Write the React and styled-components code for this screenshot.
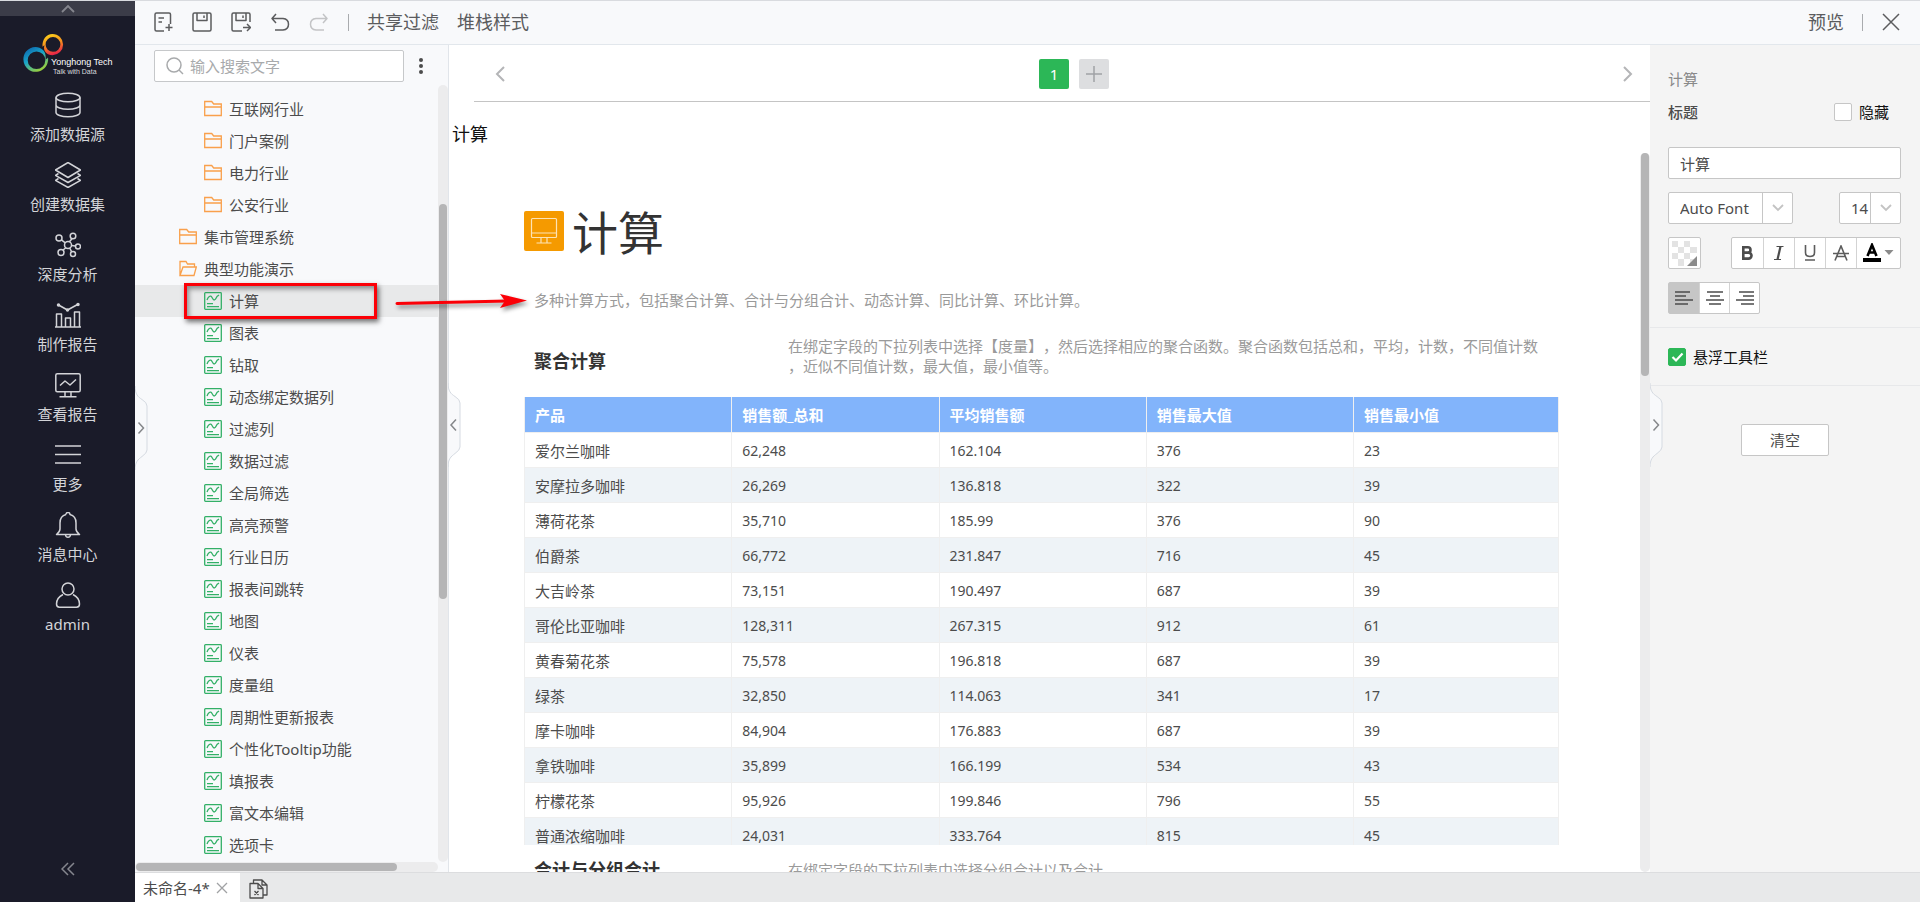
import React, { useState } from "react";
import styled, { createGlobalStyle } from "styled-components";

const GlobalStyle = createGlobalStyle`
  * {
    box-sizing: border-box;
  }
  body {
    margin: 0;
    color: #4c4c4c;
    font-family: "Noto Sans", "Noto Sans CJK SC", sans-serif;
    font-size: 15px;
    line-height: 20px;
    text-spacing-trim: space-all;
  }
  h1, h2, p, ul {
    margin: 0;
    padding: 0;
  }
  button, input, select {
    margin: 0;
    padding: 0;
    border: 0;
    background: none;
    color: inherit;
    font: inherit;
  }
  svg {
    display: block;
    flex: none;
  }
`;

const Shell = styled.div`
  position: relative;
  display: flex;
  height: 100vh;
  overflow: hidden;
  background: #fff;
  border-top: 1px solid #d9dbdf;
`;

/* ---------- left navigation ---------- */

const SideNav = styled.nav`
  position: relative;
  flex: none;
  width: 135px;
  display: flex;
  flex-direction: column;
  align-items: stretch;
  background: #1a1b29;
  color: #d3d4d8;
`;

const NavCollapse = styled.button`
  height: 15px;
  display: flex;
  align-items: center;
  justify-content: center;
  background: #3b3c48;
  color: #85868e;
`;

const LogoLink = styled.a`
  padding: 16px 0 8px 22px;
`;

const NavItem = styled.button`
  height: 70px;
  padding-top: 8px;
  display: flex;
  flex-direction: column;
  align-items: center;
  gap: 6px;
`;

const NavFold = styled.button`
  margin-top: auto;
  height: 66px;
  display: flex;
  align-items: center;
  justify-content: center;
  color: #85868e;
`;

/* ---------- top toolbar ---------- */

const Main = styled.div`
  flex: 1;
  min-width: 0;
  display: flex;
  flex-direction: column;
`;

const Toolbar = styled.header`
  flex: none;
  height: 44px;
  padding: 0 19px 1px 18px;
  display: flex;
  align-items: center;
  background: #f8f9fb;
  border-bottom: 1px solid #e2e7ec;
  font-size: 18px;
`;

const ToolbarGroup = styled.div`
  display: flex;
  align-items: center;
  gap: ${(props) => props.$gap}px;
`;

const ToolButton = styled.button`
  display: flex;
  align-items: center;
  color: ${(props) => (props.disabled ? "#c3c4c6" : "#5b5c5e")};
`;

const Separator = styled.span`
  width: 1px;
  height: 17px;
  background: #a9abae;
`;

const Spacer = styled.div`
  flex: 1;
`;

const Workspace = styled.div`
  flex: 1;
  min-height: 0;
  display: flex;
`;

/* ---------- resource tree ---------- */

const TreePanel = styled.aside`
  position: relative;
  flex: none;
  width: 314px;
  display: flex;
  flex-direction: column;
  background: #f8f9fb;
  border-right: 1px solid #e1e5ea;
`;

const SearchRow = styled.div`
  padding: 5px 25px 3px 19px;
  display: flex;
  align-items: center;
  justify-content: space-between;
`;

const SearchBox = styled.label`
  width: 250px;
  height: 32px;
  padding: 0 11px;
  display: flex;
  align-items: center;
  gap: 6px;
  background: #fff;
  border: 1px solid #c6c8ca;
  border-radius: 2px;
  color: #a8aaac;

  input {
    flex: 1;
    min-width: 0;
    outline: none;
  }
  input::placeholder {
    color: #a8aaac;
    opacity: 1;
  }
`;

const TreeBody = styled.div`
  flex: 1;
  min-height: 0;
  display: grid;
  grid-template-columns: 1fr 10px;
  grid-template-rows: minmax(0, 1fr) 10px;
`;

const TreeList = styled.ul`
  padding-top: 8px;
  overflow: hidden;
  list-style: none;
`;

const TreeRow = styled.button`
  width: 100%;
  height: 32px;
  padding-left: ${(props) => 19 + props.$level * 25}px;
  display: flex;
  align-items: center;
  gap: 7px;
  background: ${(props) => (props.$selected ? "#e8e9ea" : "transparent")};
`;

const TrackY = styled.div`
  padding: ${(props) => props.$start}px 1px 0;
  background: #ececed;
  border-radius: 5px;
`;

const ThumbY = styled.div`
  height: ${(props) => props.$size}px;
  background: #b5b5b6;
  border-radius: 4px;
`;

const TrackX = styled.div`
  padding: 1px;
  background: #ececed;
  border-radius: 5px;
`;

const ThumbX = styled.div`
  width: 261px;
  height: 8px;
  background: #b5b5b6;
  border-radius: 4px;
`;

const Handle = styled.button`
  position: absolute;
  z-index: 1;
  top: ${(props) => props.$top}px;
  left: 100%;
`;

/* ---------- report canvas ---------- */

const Canvas = styled.main`
  position: relative;
  flex: 1;
  min-width: 0;
  display: flex;
  flex-direction: column;
`;

const PageNav = styled.div`
  height: 57px;
  margin-left: 25px;
  padding: 2px 17px 0 21px;
  display: flex;
  align-items: center;
  justify-content: space-between;
  border-bottom: 1px solid #c4c4c4;
`;

const PageArrow = styled.button`
  color: #b4b5b7;
`;

const PageButtons = styled.div`
  padding-left: 20px;
  display: flex;
  gap: 10px;
`;

const PageButton = styled.button`
  width: 30px;
  height: 30px;
  display: flex;
  align-items: center;
  justify-content: center;
  border-radius: 2px;
  background: ${(props) => (props.$active ? "#2cb757" : "#dddee0")};
  color: ${(props) => (props.$active ? "#fff" : "#a0a2a5")};
`;

const ComponentTitle = styled.p`
  padding: 14px 0 1px 3px;
  color: #111;
  font-size: 18px;
  line-height: 36px;
`;

const Viewport = styled.div`
  flex: 1;
  min-height: 0;
  display: flex;

  ${TrackY} {
    width: 10px;
  }
`;

const Report = styled.article`
  flex: 1;
  min-width: 0;
  padding: 58px 81px 0 75px;
  overflow: hidden;
`;

const ReportHeader = styled.div`
  display: flex;
  gap: 8px;
`;

const ReportTitle = styled.h1`
  color: #333;
  font-size: 46px;
  font-weight: 400;
  line-height: 42px;
`;

const ReportSummary = styled.p`
  margin: 37px 0 26px;
  padding-left: 10px;
  color: #9a9a9a;
`;

const SectionIntro = styled.div`
  height: 61px;
  padding: 0 0 11px 10px;
  display: grid;
  grid-template-columns: 254px 1fr;
  align-items: ${(props) => props.$align};
  color: #9a9a9a;
  white-space: nowrap;
`;

const SectionTitle = styled.h2`
  color: #333;
  font-size: 18px;
  font-weight: 700;
  line-height: 50px;
`;

const TableFrame = styled.div`
  height: 448px;
  overflow: hidden;
  border-left: 1px solid #efefef;
`;

const DataTable = styled.table`
  width: 100%;
  table-layout: fixed;
  border-spacing: 0;

  th,
  td {
    height: 35px;
    padding: 2px 10px 0;
    text-align: left;
    border-right: 1px solid #efefef;
    border-bottom: 1px solid #efefef;
  }
  th {
    height: 36px;
    padding-top: 0;
    background: #82b4fb;
    color: #fff;
    font-weight: 700;
  }
  th:last-child {
    width: 205px;
  }
  td + td {
    font-size: 14px;
  }
  tbody tr:nth-child(even) {
    background: #eef3f7;
  }
`;

/* ---------- properties panel ---------- */

const Properties = styled.aside`
  flex: none;
  width: 270px;
  background: #f4f4f4;
`;

const PropGroup = styled.section`
  padding: ${(props) => props.$padding};
  display: flex;
  flex-direction: column;
  gap: 13px;
  border-bottom: 1px solid #e7e8ea;
`;

const PropRow = styled.div`
  height: 32px;
  display: flex;
  align-items: center;
  justify-content: space-between;
`;

const PanelTitle = styled.p`
  color: #8a8a8a;
  line-height: 19px;
`;

const TitleRow = styled.div`
  height: 20px;
  margin-bottom: 12px;
  padding-right: 12px;
  display: flex;
  align-items: center;
  justify-content: space-between;
  font-weight: 500;
`;

const CheckLabel = styled.label`
  display: flex;
  align-items: center;
  gap: 7px;
  color: #111;
  font-weight: 400;
`;

const CheckBox = styled.input`
  appearance: none;
  width: 18px;
  height: 18px;
  background: #fff;
  border: 1px solid #c6c6c6;
  border-radius: 2px;

  &:checked {
    border-color: #2cb757;
    background: #2cb757;
  }
`;

const CheckHolder = styled.span`
  position: relative;
  display: flex;

  svg {
    position: absolute;
    inset: 0;
    pointer-events: none;
  }
`;

const TextInput = styled.input`
  width: 100%;
  height: 32px;
  padding: 0 11px;
  background: #fff;
  border: 1px solid #c6c6c6;
  border-radius: 2px;
`;

const SelectBox = styled.span`
  width: ${(props) => props.$width}px;
  height: 32px;
  display: grid;
  background: #fff;
  border: 1px solid #c6c6c6;
  border-radius: 2px;

  select,
  span {
    grid-area: 1 / 1;
  }
  select {
    appearance: none;
    padding-left: 11px;
    outline: none;
  }
  span {
    width: 30px;
    justify-self: end;
    display: flex;
    align-items: center;
    justify-content: center;
    border-left: 1px solid #c6c6c6;
    color: #c3c3c3;
    pointer-events: none;
  }
`;

const SwatchButton = styled.button`
  width: 33px;
  height: 32px;
  display: flex;
  align-items: center;
  justify-content: center;
  background: #fff;
  border: 1px solid #c6c6c6;
  border-radius: 2px;
`;

const ButtonGroup = styled.div`
  height: 32px;
  display: flex;
  background: #fff;
  border: 1px solid #c6c6c6;
  border-radius: 2px;
`;

const FormatButton = styled.button`
  width: ${(props) => props.$width || 31}px;
  display: flex;
  align-items: center;
  justify-content: center;
  background: ${(props) => (props.$active ? "#c6c6c6" : "transparent")};

  & + & {
    border-left: 1px solid #d3d3d3;
  }
`;

const ClearButton = styled.button`
  width: 88px;
  height: 32px;
  display: block;
  margin: 38px auto 0;
  background: #fff;
  border: 1px solid #c6c6c6;
  border-radius: 2px;
`;

/* ---------- bottom tabs ---------- */

const TabBar = styled.footer`
  flex: none;
  height: 30px;
  display: flex;
  background: #e8e9ea;
  border-top: 1px solid #dcdddf;
`;

const Tab = styled.div`
  width: 105px;
  padding: 0 12px 0 8px;
  display: flex;
  align-items: center;
  justify-content: space-between;
  background: #fff;
`;

const CloseTab = styled.button`
  color: #a0a2a4;
`;

const TabTool = styled.button`
  padding: 2px 0 0 9px;
  display: flex;
  align-items: center;
`;

/* ---------- callout drawn over the page ---------- */

const Callout = styled.div`
  position: absolute;
  z-index: 2;
  top: 282px;
  left: 184px;
  display: flex;
  align-items: center;
  gap: 18px;
  pointer-events: none;
`;

const CalloutBox = styled.div`
  width: 193px;
  height: 36px;
  border: 3px solid #fb0007;
  box-shadow: 2px 3px 5px rgba(0, 0, 0, 0.55), inset 2px 3px 5px rgba(0, 0, 0, 0.4);
`;

const CalloutArrow = styled.svg`
  overflow: visible;
  filter: drop-shadow(2px 3px 2px rgba(0, 0, 0, 0.45));
`;

const Line = ({ size = 20, width = 1.5, children }) => (
  <svg
    width={size}
    height={size}
    viewBox={`0 0 ${size} ${size}`}
    fill="none"
    stroke="currentColor"
    strokeWidth={width}
    strokeLinejoin="round"
  >
    {children}
  </svg>
);

const navItems = [
  {
    label: "添加数据源",
    icon: (
      <>
        <ellipse cx="13" cy="5.5" rx="12" ry="4.3" />
        <path d="M1 5.5v15c0 2.4 5.4 4.3 12 4.3s12-1.9 12-4.3v-15M1 13c0 2.4 5.4 4.3 12 4.3S25 15.4 25 13" />
      </>
    ),
  },
  {
    label: "创建数据集",
    icon: (
      <>
        <path d="M13 .5l12.5 7.5L13 15.5.5 8z" />
        <path d="M3.5 11.5l-3 1.8L13 20.5l12.5-7.2-3-1.8M3.5 16.5l-3 1.8L13 25.5l12.5-7.2-3-1.8" />
      </>
    ),
  },
  {
    label: "深度分析",
    icon: (
      <>
        <circle cx="13" cy="13" r="3.5" />
        <circle cx="4" cy="6" r="3" />
        <circle cx="18" cy="4" r="2.8" />
        <circle cx="23" cy="14.5" r="2.5" />
        <circle cx="6" cy="20.5" r="3" />
        <circle cx="18" cy="22" r="2.5" />
        <path d="M6.4 7.8l3.900 3M14.4 9.8L17 6.7M16.5 13.4l4 .7M10.8 15.7l-3 2.600M14.7 16l2 3.800" />
      </>
    ),
  },
  {
    label: "制作报告",
    icon: (
      <>
        <path d="M0 25h26M1.5 25V12h5v13M10.5 25V16h5v9M19.5 25V10h5v15M3.5 3l9 5 11-6" />
        <circle cx="3.5" cy="3" r="1" fill="currentColor" />
        <circle cx="12.5" cy="8" r="1" fill="currentColor" />
        <circle cx="23" cy="2.5" r="1" fill="currentColor" />
      </>
    ),
  },
  {
    label: "查看报告",
    icon: (
      <>
        <rect x=".8" y="1.8" width="24.4" height="18" rx="1.5" />
        <path d="M5 13.5l5-4.5 5 4 6-5.5M10 20v4M16 20v4M4.5 24.8h17" />
      </>
    ),
  },
  { label: "更多", icon: <path d="M0 4h26M0 12.5h26M0 21h26" /> },
  {
    label: "消息中心",
    icon: (
      <path d="M11 2.5a2 2 0 0 1 4 0c4 1 6 4.500 6 8.500v6c0 2 1 3.500 3.500 5.500h-23C4 20.500 5 19 5 17v-6c0-4 2-7.500 6-8.500M10.500 23c.5 3 4.500 3 5 0" />
    ),
  },
  {
    label: "admin",
    icon: (
      <>
        <circle cx="13" cy="7" r="6" />
        <path d="M8 12.5c-4 2-6.500 5.500-6.500 9.500 0 2 1 3.200 3 3.200h17c2 0 3-1.200 3-3.200 0-4-2.500-7.500-6.500-9.500" />
      </>
    ),
  },
];

const tree = [
  { name: "互联网行业", level: 2, type: "folder" },
  { name: "门户案例", level: 2, type: "folder" },
  { name: "电力行业", level: 2, type: "folder" },
  { name: "公安行业", level: 2, type: "folder" },
  { name: "集市管理系统", level: 1, type: "folder" },
  { name: "典型功能演示", level: 1, type: "open" },
  ...[
    "计算",
    "图表",
    "钻取",
    "动态绑定数据列",
    "过滤列",
    "数据过滤",
    "全局筛选",
    "高亮预警",
    "行业日历",
    "报表间跳转",
    "地图",
    "仪表",
    "度量组",
    "周期性更新报表",
    "个性化Tooltip功能",
    "填报表",
    "富文本编辑",
    "选项卡",
  ].map((name) => ({ name, level: 2, type: "report" })),
];

const columns = ["产品", "销售额_总和", "平均销售额", "销售最大值", "销售最小值"];

const rows = [
  ["爱尔兰咖啡", "62,248", "162.104", "376", "23"],
  ["安摩拉多咖啡", "26,269", "136.818", "322", "39"],
  ["薄荷花茶", "35,710", "185.99", "376", "90"],
  ["伯爵茶", "66,772", "231.847", "716", "45"],
  ["大吉岭茶", "73,151", "190.497", "687", "39"],
  ["哥伦比亚咖啡", "128,311", "267.315", "912", "61"],
  ["黄春菊花茶", "75,578", "196.818", "687", "39"],
  ["绿茶", "32,850", "114.063", "341", "17"],
  ["摩卡咖啡", "84,904", "176.883", "687", "39"],
  ["拿铁咖啡", "35,899", "166.199", "534", "43"],
  ["柠檬花茶", "95,926", "199.846", "796", "55"],
  ["普通浓缩咖啡", "24,031", "333.764", "815", "45"],
];

const alignLines = {
  left: "M0 1h15M0 5h11M0 9h18M0 13h13",
  center: "M1 1h16M4 5h10M0 9h18M3 13h12",
  right: "M3 1h15M7 5h11M0 9h18M5 13h13",
};

function Logo() {
  return (
    <svg width="94" height="44" viewBox="22 32 94 44">
      <defs>
        <linearGradient id="cool" x1="0" y1="0" x2="0.6" y2="1">
          <stop offset="0" stopColor="#0b5aa8" />
          <stop offset="0.5" stopColor="#19a5c9" />
          <stop offset="1" stopColor="#9bd03c" />
        </linearGradient>
        <linearGradient id="warm" x1="0.3" y1="0" x2="0.6" y2="1">
          <stop offset="0" stopColor="#fbd21b" />
          <stop offset="0.5" stopColor="#f58a1f" />
          <stop offset="1" stopColor="#e6194b" />
        </linearGradient>
      </defs>
      <path
        fill="url(#warm)"
        fillRule="evenodd"
        d="M52.5 34a10.6 10.6 0 1 1 0 21.2c-3 0-5-1-6.5-2.5-2-2-2.500-5-1.500-7.500-.8.5-1.500 1-2 1.500C42 40 46 34 52.500 34zM53 37a7.400 7.400 0 1 0 0 14.800A7.400 7.400 0 0 0 53 37z"
      />
      <path
        fill="url(#cool)"
        fillRule="evenodd"
        d="M43 50c-5-5-13-3.500-17 1.500-4.500 6-3 14.500 3 18.500 6 3.800 14 1.500 17.500-4.500 1.500-2.500 1.900-5.500 1.500-8-1 1-1.500 1.500-2.500 2 .5-3.500 0-7-2.500-9.500zM36.500 51.500a8.800 8.800 0 1 1 0 17.600 8.800 8.800 0 0 1 0-17.600z"
      />
      <text x="51" y="65" fill="#fff" fontSize="9" fontFamily="'Liberation Sans', sans-serif">
        Yonghong Tech
      </text>
      <text x="53" y="74" fill="#d9dade" fontSize="7" fontFamily="'Liberation Sans', sans-serif">
        Talk with Data
      </text>
    </svg>
  );
}

function TreeIcon({ type }) {
  if (type === "report") {
    return (
      <svg width="18" height="18" viewBox="0 0 18 18" fill="none" stroke="#33b067" strokeWidth="1.3">
        <rect x=".7" y=".7" width="16.6" height="16.6" rx=".8" />
        <path d="M3 8c1-3 3.5-5.5 5-2.500s2.500 4 5-1L15 3M3 11.700h6M3 14.700h12" />
      </svg>
    );
  }
  return (
    <svg width="18" height="18" viewBox="0 0 18 18" fill="none" stroke="#f9a04b" strokeWidth="1.3">
      {type === "open" ? (
        <path d="M1 15.5v-14h6l1.500 2.500h7v3M1 15.500L4 7h13.300L15 15.500z" />
      ) : (
        <path d="M.7 15.5v-14h7l2 2.500h7.600v11.500zM.7 7h16.600" />
      )}
    </svg>
  );
}

function Chevron({ d, width, height, stroke = 1.5 }) {
  return (
    <svg
      width={width}
      height={height}
      viewBox={`0 0 ${width} ${height}`}
      fill="none"
      stroke="currentColor"
      strokeWidth={stroke}
    >
      <path d={d} />
    </svg>
  );
}

function PanelHandle({ top, direction, label }) {
  const arrow = direction === "left" ? "M8 36.5l-5 5.5 5 5.5" : "M3.5 36.5l5 5.5-5 5.5";
  return (
    <Handle $top={top} aria-label={label}>
      <svg width="13" height="84" viewBox="0 0 13 84" fill="none">
        <path
          d="M0 0c0 8 3 11 7 13.5q5 3 5 6.500v44q0 3-5 6.500C3 73.500 0 76 0 84"
          fill="#f8f9fb"
          stroke="#d5dae1"
        />
        <path d={arrow} stroke="#85878a" strokeWidth="1.5" />
      </svg>
    </Handle>
  );
}

function PropertiesPanel() {
  const [title, setTitle] = useState("计算");
  const [hidden, setHidden] = useState(false);
  const [floating, setFloating] = useState(true);
  const [align, setAlign] = useState("left");

  return (
    <Properties>
      <PropGroup $padding="25px 19px 13px 18px">
        <PanelTitle>计算</PanelTitle>
        <TitleRow>
          标题
          <CheckLabel>
            <CheckBox type="checkbox" checked={hidden} onChange={(e) => setHidden(e.target.checked)} />
            隐藏
          </CheckLabel>
        </TitleRow>
        <TextInput aria-label="标题" value={title} onChange={(e) => setTitle(e.target.value)} />
        <PropRow>
          <SelectBox $width={125}>
            <select aria-label="字体">
              <option>Auto Font</option>
            </select>
            <span>
              <Chevron d="M1 1l5 5 5-5" width={12} height={8} stroke={1.8} />
            </span>
          </SelectBox>
          <SelectBox $width={62}>
            <select aria-label="字号">
              <option>14</option>
            </select>
            <span>
              <Chevron d="M1 1l5 5 5-5" width={12} height={8} stroke={1.8} />
            </span>
          </SelectBox>
        </PropRow>
        <PropRow>
          <SwatchButton aria-label="背景色">
            <svg width="25" height="25" viewBox="0 0 25 25">
              <rect width="25" height="25" fill="#fff" />
              <path
                fill="#e3e3e3"
                d="M0 0h6v6H0zM12 0h6v6h-6zM6 6h6v6H6zM18 6h7v6h-7zM0 12h6v6H0zM12 12h6v6h-6zM6 18h6v7H6zM18 18h7v7h-7z"
              />
              <path fill="#8b8b8b" d="M25 15v10H15z" />
            </svg>
          </SwatchButton>
          <ButtonGroup>
            <FormatButton aria-label="粗体">
              <svg width="13" height="16" viewBox="0 0 13 16" fill="none" stroke="#4c4c4c" strokeWidth="2.6">
                <path d="M2.3 2.2h4.5a2.700 2.700 0 0 1 0 5.400H2.300zM2.300 7.600h5.200a3 3 0 0 1 0 6H2.300z" />
              </svg>
            </FormatButton>
            <FormatButton aria-label="斜体">
              <svg width="12" height="16" viewBox="0 0 12 16" fill="none" stroke="#4c4c4c">
                <path d="M3.5 1.5h7M1 14.5h7" strokeWidth="1.2" />
                <path d="M7.5 1.5l-3 13" strokeWidth="2.2" />
              </svg>
            </FormatButton>
            <FormatButton aria-label="下划线">
              <svg width="12" height="16" viewBox="0 0 12 16" fill="none" stroke="#5c5c5c" strokeWidth="1.6">
                <path d="M1.5 0v7.5q0 4 4.500 4t4.500-4V0M1 15h10" />
              </svg>
            </FormatButton>
            <FormatButton aria-label="删除线">
              <svg width="16" height="16" viewBox="0 0 16 16" fill="none" stroke="#5c5c5c" strokeWidth="1.6">
                <path d="M2 15.5L8 1l6 14.500M0 8.500h16M4 11.500h8" />
              </svg>
            </FormatButton>
            <FormatButton $width={44} aria-label="文字颜色">
              <svg width="31" height="20" viewBox="0 0 31 20">
                <path d="M4.5 13L9 2l4.500 11M6 9.500h6" fill="none" stroke="#000" strokeWidth="2.6" />
                <path d="M0 15h18v4H0z" fill="#000" />
                <path d="M21.5 7h9L26 12z" fill="#8b8b8b" />
              </svg>
            </FormatButton>
          </ButtonGroup>
        </PropRow>
        <PropRow>
          <ButtonGroup>
            {Object.keys(alignLines).map((key) => (
              <FormatButton
                key={key}
                aria-label={key}
                $width={30}
                $active={align === key}
                onClick={() => setAlign(key)}
              >
                <Chevron d={alignLines[key]} width={18} height={14} stroke={1.3} />
              </FormatButton>
            ))}
          </ButtonGroup>
        </PropRow>
      </PropGroup>
      <PropGroup $padding="19px 18px 18px">
        <CheckLabel>
          <CheckHolder>
            <CheckBox
              type="checkbox"
              checked={floating}
              onChange={(e) => setFloating(e.target.checked)}
            />
            {floating && (
              <svg width="18" height="18" viewBox="0 0 18 18" fill="none" stroke="#fff" strokeWidth="2.2">
                <path d="M4.5 9L8 12.5l6.500-7" />
              </svg>
            )}
          </CheckHolder>
          悬浮工具栏
        </CheckLabel>
      </PropGroup>
      <ClearButton>清空</ClearButton>
    </Properties>
  );
}

export default function App() {
  const [selected, setSelected] = useState("计算");

  return (
    <Shell>
      <GlobalStyle />
      <SideNav>
        <NavCollapse aria-label="收起">
          <Chevron d="M1 8l6-6 6 6" width={14} height={9} stroke={1.8} />
        </NavCollapse>
        <LogoLink href="#" aria-label="Yonghong Tech">
          <Logo />
        </LogoLink>
        {navItems.map((item) => (
          <NavItem key={item.label}>
            <Line size={26}>{item.icon}</Line>
            {item.label}
          </NavItem>
        ))}
        <NavFold aria-label="折叠菜单">
          <Chevron d="M7 1L1 7l6 6M13 1L7 7l6 6" width={14} height={14} />
        </NavFold>
        <PanelHandle top={385} direction="right" label="展开" />
      </SideNav>

      <Main>
        <Toolbar>
          <ToolbarGroup $gap={19}>
            <ToolButton aria-label="新建">
              <Line>
                <path d="M17.5 12V2.5Q17.5 1 16 1H3.500Q2 1 2 2.500v15Q2 19 3.500 19H11M5.500 6H11M5.500 10H9M16 12v7M12.500 15.500h7" />
              </Line>
            </ToolButton>
            <ToolButton aria-label="保存">
              <Line>
                <path d="M2.5 1h15Q19 1 19 2.500v15q0 1.500-1.500 1.500h-15Q1 19 1 17.500v-15Q1 1 2.500 1zM5 1v7.500h10V1M12 3.500V6" />
              </Line>
            </ToolButton>
            <ToolButton aria-label="另存为">
              <Line>
                <path d="M11 19H2.5Q1 19 1 17.500v-15Q1 1 2.500 1h15Q19 1 19 2.500V10M5 1v7.500h10V1M12 3.500V6M12 15.500h7M16 12l3.500 3.500L16 19" />
              </Line>
            </ToolButton>
            <ToolButton aria-label="撤销">
              <Line>
                <path d="M6 2L2 6.5 6 11M2 6.500h11q5.500.5 5.500 5.700T13 18H5" />
              </Line>
            </ToolButton>
            <ToolButton aria-label="重做" disabled>
              <Line>
                <path d="M14 2l4 4.5-4 4.500M18 6.500H7Q1.500 7 1.500 12.200T7 18h8" />
              </Line>
            </ToolButton>
            <ToolbarGroup $gap={18}>
              <Separator />
              <ToolButton>共享过滤</ToolButton>
              <ToolButton>堆栈样式</ToolButton>
            </ToolbarGroup>
          </ToolbarGroup>
          <Spacer />
          <ToolbarGroup $gap={18}>
            <ToolButton>预览</ToolButton>
            <Separator />
            <ToolButton aria-label="关闭">
              <Line>
                <path d="M2 2l16 16M18 2L2 18" />
              </Line>
            </ToolButton>
          </ToolbarGroup>
        </Toolbar>

        <Workspace>
          <TreePanel>
            <SearchRow>
              <SearchBox>
                <Line size={18}>
                  <circle cx="8" cy="8" r="7" />
                  <path d="M13 13l4 4" />
                </Line>
                <input aria-label="搜索" placeholder="输入搜索文字" />
              </SearchBox>
              <ToolButton aria-label="更多操作">
                <svg width="4" height="16" viewBox="0 0 4 16" fill="#4c4c4c">
                  <circle cx="2" cy="2" r="2" />
                  <circle cx="2" cy="8" r="2" />
                  <circle cx="2" cy="14" r="2" />
                </svg>
              </ToolButton>
            </SearchRow>
            <TreeBody>
              <TreeList>
                {tree.map((node) => (
                  <li key={node.name}>
                    <TreeRow
                      $level={node.level}
                      $selected={node.name === selected}
                      onClick={() => setSelected(node.name)}
                    >
                      <TreeIcon type={node.type} />
                      {node.name}
                    </TreeRow>
                  </li>
                ))}
              </TreeList>
              <TrackY $start={119}>
                <ThumbY $size={395} />
              </TrackY>
              <TrackX>
                <ThumbX />
              </TrackX>
            </TreeBody>
            <PanelHandle top={338} direction="left" label="收起资源树" />
          </TreePanel>

          <Canvas>
            <PageNav>
              <PageArrow aria-label="上一页">
                <Chevron d="M9 1L2 8l7 7" width={10} height={16} stroke={2} />
              </PageArrow>
              <PageButtons>
                <PageButton $active>1</PageButton>
                <PageButton aria-label="添加页">
                  <Line size={16}>
                    <path d="M8 0v16M0 8h16" />
                  </Line>
                </PageButton>
              </PageButtons>
              <PageArrow aria-label="下一页">
                <Chevron d="M1 1l7 7-7 7" width={10} height={16} stroke={2} />
              </PageArrow>
            </PageNav>
            <ComponentTitle>计算</ComponentTitle>
            <Viewport>
              <Report>
                <ReportHeader>
                  <svg width="40" height="40" viewBox="0 0 40 40" fill="none" stroke="#fde3b5" strokeWidth="1.2">
                    <rect width="40" height="40" rx="2" fill="#f59a00" stroke="none" />
                    <rect x="7.5" y="7.5" width="25" height="19" rx="1" />
                    <path d="M7.5 22h25M17 27v4.500M23 27v4.500M12.500 32h15" />
                  </svg>
                  <ReportTitle>计算</ReportTitle>
                </ReportHeader>
                <ReportSummary>
                  多种计算方式，包括聚合计算、合计与分组合计、动态计算、同比计算、环比计算。
                </ReportSummary>
                <SectionIntro $align="start">
                  <SectionTitle>聚合计算</SectionTitle>
                  <p>
                    在绑定字段的下拉列表中选择【度量】，然后选择相应的聚合函数。聚合函数包括总和，平均，计数，不同值计数
                    <br />
                    ，近似不同值计数，最大值，最小值等。
                  </p>
                </SectionIntro>
                <TableFrame>
                  <DataTable>
                    <thead>
                      <tr>
                        {columns.map((name) => (
                          <th key={name}>{name}</th>
                        ))}
                      </tr>
                    </thead>
                    <tbody>
                      {rows.map((row) => (
                        <tr key={row[0]}>
                          {row.map((value, i) => (
                            <td key={columns[i]}>{value}</td>
                          ))}
                        </tr>
                      ))}
                    </tbody>
                  </DataTable>
                </TableFrame>
                <SectionIntro $align="center">
                  <SectionTitle>合计与分组合计</SectionTitle>
                  <p>在绑定字段的下拉列表中选择分组合计以及合计</p>
                </SectionIntro>
              </Report>
              <TrackY $start={0}>
                <ThumbY $size={223} />
              </TrackY>
            </Viewport>
            <PanelHandle top={338} direction="right" label="收起属性" />
          </Canvas>

          <PropertiesPanel />
        </Workspace>

        <TabBar>
          <Tab>
            未命名-4*
            <CloseTab aria-label="关闭标签">
              <Line size={12} width={1.3}>
                <path d="M1 1l10 10M11 1L1 11" />
              </Line>
            </CloseTab>
          </Tab>
          <TabTool aria-label="关闭全部">
            <Line width={1.3}>
              <path d="M1 4.500h8l5 5V19H1zM9 4.500v5h5M4.500 4.500V1H13l5 5v10h-4M13 1v5h5M5.500 12l4 4M9.500 12l-4 4" />
            </Line>
          </TabTool>
        </TabBar>
      </Main>

      <Callout>
        <CalloutBox />
        <CalloutArrow width="132" height="16" viewBox="0 0 132 16">
          <path d="M2 10.5L112 8" stroke="#fb0007" strokeWidth="3" strokeLinecap="round" />
          <path d="M105 1l27 6.5-27 7.500 5-7z" fill="#fb0007" />
        </CalloutArrow>
      </Callout>
    </Shell>
  );
}
